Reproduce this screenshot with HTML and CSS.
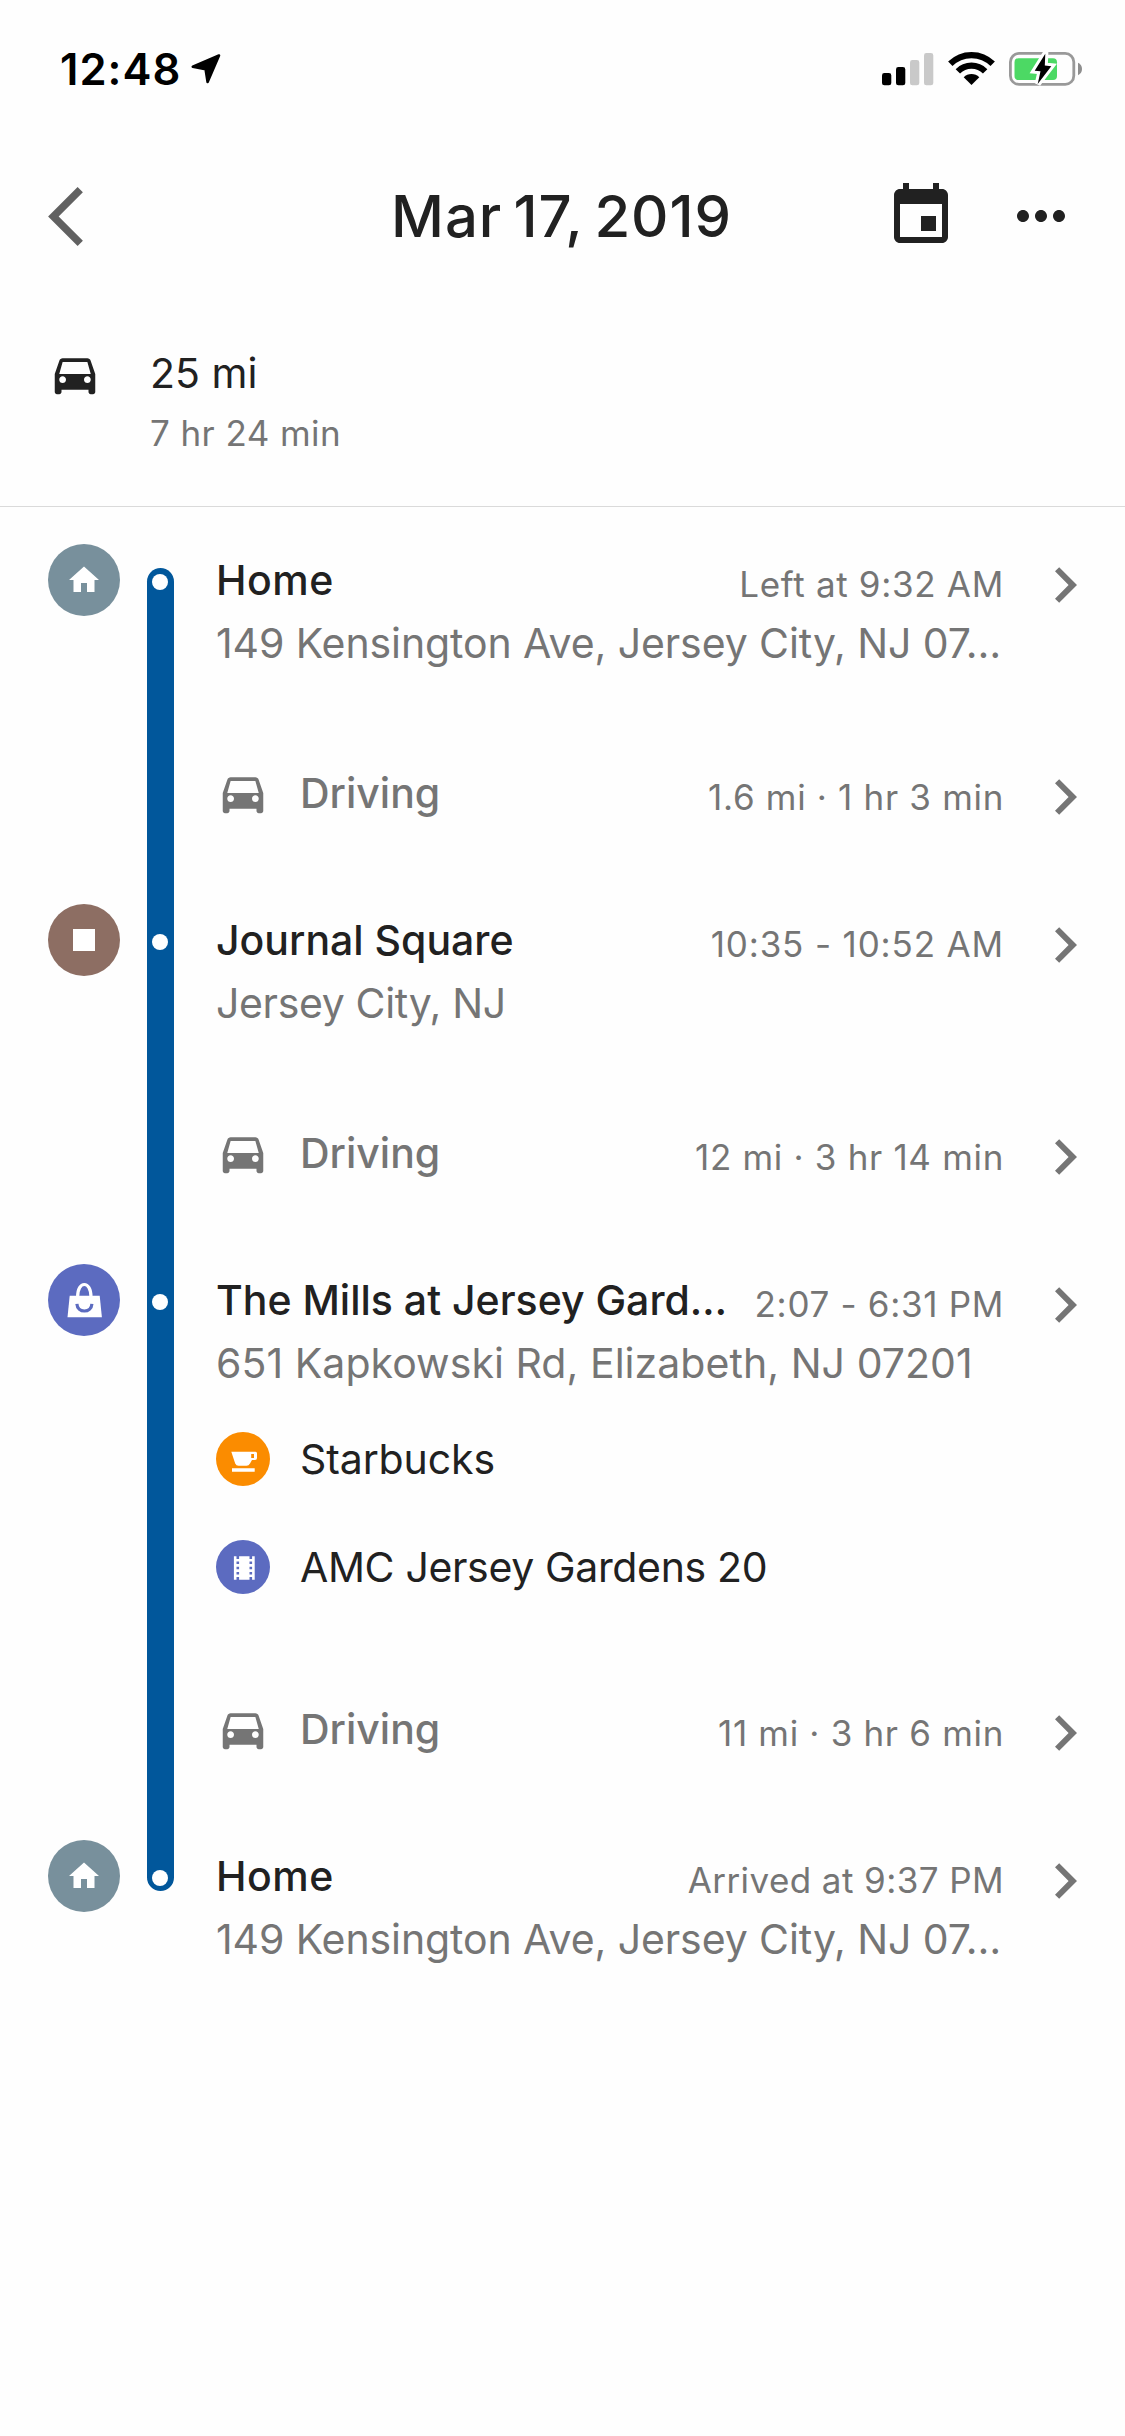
FILE: index.html
```
<!DOCTYPE html>
<html lang="en">
<head>
<meta charset="utf-8">
<title>Timeline</title>
<link rel="stylesheet" href="styles.css">
</head>
<body>
<svg class="sprite" aria-hidden="true">
  <symbol id="car" viewBox="0 0 24 24"><path d="M18.92 6.01C18.72 5.42 18.16 5 17.5 5h-11c-.66 0-1.21.42-1.42 1.01L3 12v8c0 .55.45 1 1 1h1c.55 0 1-.45 1-1v-1h12v1c0 .55.45 1 1 1h1c.55 0 1-.45 1-1v-8l-2.08-5.99zM6.5 16c-.83 0-1.5-.67-1.5-1.5S5.67 13 6.5 13s1.5.67 1.5 1.5S7.33 16 6.5 16zm11 0c-.83 0-1.5-.67-1.5-1.5s.67-1.5 1.5-1.5 1.5.67 1.5 1.5-.67 1.5-1.5 1.5zM5 12l1.5-5.3h11L19 12H5z"/></symbol>
  <symbol id="home" viewBox="0 0 24 24"><path d="M10 20v-6h4v6h5v-8h3L12 3 2 12h3v8z"/></symbol>
  <symbol id="next" viewBox="8.59 6 7.41 12"><path d="M10 6L8.59 7.41 13.17 12l-4.58 4.59L10 18l6-6z"/></symbol>
</svg>

<div class="status">
  <span class="clock">12:48</span>
  <svg class="location" viewBox="0 0 30 30"><path d="M28 1.5 1.8 12.7 14.6 15.2 16.6 28Z" fill="#000" stroke="#000" stroke-width="2.6" stroke-linejoin="round"/></svg>
  <div class="indicators">
    <svg class="signal" viewBox="0 0 52 34">
      <rect x="0" y="21" width="9.3" height="12.3" rx="2.4"/>
      <rect x="14" y="15" width="9.3" height="18.3" rx="2.4"/>
      <rect x="28" y="8" width="9.3" height="25.3" rx="2.4" fill="#c9c9c9"/>
      <rect x="42" y="1" width="9.3" height="32.3" rx="2.4" fill="#c9c9c9"/>
    </svg>
    <svg class="wifi" viewBox="0 0 45 34">
      <path d="M1.300 11.800A30 30 0 0 1 43.700 11.800M8.850 19.350A19.300 19.300 0 0 1 36.150 19.350" fill="none" stroke="#000" stroke-width="6.200"/>
      <path d="M22.5 33 14.7 25.2A11 11 0 0 1 30.3 25.2Z"/>
    </svg>
    <svg class="battery" viewBox="0 0 73 34">
      <rect x="1.4" y="1.4" width="63.4" height="31" rx="8.6" fill="none" stroke="#999" stroke-width="2.8"/>
      <path d="M69 10.8C71.6 12 73 14.3 73 17s-1.4 5-4 6.2Z" fill="#8e8e8e"/>
      <rect x="5.5" y="6.2" width="42.5" height="21.8" rx="4" fill="#4cd964"/>
      <path d="M36.3 1.8 25.7 18.7 31.5 19.3 28.7 32 42.3 14.2 35.8 13.5Z" stroke="#fff" stroke-width="6"/>
      <path d="M36.3 1.8 25.7 18.7 31.5 19.3 28.7 32 42.3 14.2 35.8 13.5Z"/>
    </svg>
  </div>
</div>

<header class="bar">
  <svg class="back" viewBox="0 2.1 11.67 19.8"><path d="M11.67 3.87L9.9 2.1 0 12l9.9 9.9 1.77-1.77L3.54 12z"/></svg>
  <h1 class="title">Mar 17, 2019</h1>
  <div class="actions">
    <svg class="action" viewBox="0 0 24 24"><path d="M17 12h-5v5h5v-5zM16 1v2H8V1H6v2H5c-1.11 0-1.99.9-1.99 2L3 19c0 1.1.89 2 2 2h14c1.1 0 2-.9 2-2V5c0-1.1-.9-2-2-2h-1V1h-2zm3 18H5V8h14v11z"/></svg>
    <svg class="action" viewBox="0 0 24 24"><path d="M6 10c-1.1 0-2 .9-2 2s.9 2 2 2 2-.9 2-2-.9-2-2-2zm12 0c-1.1 0-2 .9-2 2s.9 2 2 2 2-.9 2-2-.9-2-2-2zm-6 0c-1.1 0-2 .9-2 2s.9 2 2 2 2-.9 2-2-.9-2-2-2z"/></svg>
  </div>
</header>

<section class="summary">
  <svg class="car"><use href="#car"/></svg>
  <div class="totals">
    <div class="distance">25 mi</div>
    <div class="duration">7 hr 24 min</div>
  </div>
</section>

<main class="timeline">
  <div class="row stop first">
    <div class="badge home"><svg class="glyph"><use href="#home"/></svg></div>
    <div class="rail"><i class="dot"></i></div>
    <div class="body">
      <div class="line"><span class="name loose">Home</span><span class="time">Left at 9:32 AM</span></div>
      <div class="address">149 Kensington Ave, Jersey City, NJ 07…</div>
    </div>
    <svg class="next"><use href="#next"/></svg>
  </div>

  <div class="row drive">
    <div class="rail"></div>
    <div class="body">
      <div class="line"><span class="mode"><svg class="car"><use href="#car"/></svg>Driving</span><span class="time">1.6 mi · 1 hr 3 min</span></div>
    </div>
    <svg class="next"><use href="#next"/></svg>
  </div>

  <div class="row stop">
    <div class="badge square"><i class="block"></i></div>
    <div class="rail"><i class="dot"></i></div>
    <div class="body">
      <div class="line"><span class="name">Journal Square</span><span class="time airy">10:35 - 10:52 AM</span></div>
      <div class="address tight">Jersey City, NJ</div>
    </div>
    <svg class="next"><use href="#next"/></svg>
  </div>

  <div class="row drive">
    <div class="rail"></div>
    <div class="body">
      <div class="line"><span class="mode"><svg class="car"><use href="#car"/></svg>Driving</span><span class="time">12 mi · 3 hr 14 min</span></div>
    </div>
    <svg class="next"><use href="#next"/></svg>
  </div>

  <div class="row stop visits">
    <div class="badge shop">
      <svg class="bag" viewBox="0 0 72 72">
        <path d="M29.6 33C29.6 24.5 32.8 20.5 36.3 20.5S43 24.5 43 33" fill="none" stroke="#fff" stroke-width="3.2"/>
        <path d="M21.7 31.7H51.7L53.9 53.3H19.5Z"/>
        <path d="M28.9 39.8C29.4 49.4 43.4 49.4 43.9 39.8" fill="none" stroke="#5c6bc0" stroke-width="3.2"/>
      </svg>
    </div>
    <div class="rail"><i class="dot"></i></div>
    <div class="body">
      <div class="line"><span class="name">The Mills at Jersey Gard…</span><span class="time">2:07 - 6:31 PM</span></div>
      <div class="address wide">651 Kapkowski Rd, Elizabeth, NJ 07201</div>
      <div class="places">
        <div class="place">
          <svg class="pin" viewBox="0 0 54 54">
            <circle cx="27" cy="27" r="27" fill="#fb8c00"/>
            <path fill="#fff" fill-rule="evenodd" d="M15.3 19.7H39.5Q41 19.7 41 21.2V26Q41 28 39 28H36L34 31.5Q32.8 33.7 30.5 33.7H22.5Q20.2 33.7 19.2 31.5ZM35.2 22V26H38V22ZM16 36.3H38.7V39.7H16Z"/>
          </svg>
          <span class="visit">Starbucks</span>
        </div>
        <div class="place">
          <svg class="pin" viewBox="0 0 54 54">
            <circle cx="27" cy="27" r="27" fill="#5c6bc0"/>
            <path fill="#fff" transform="translate(12.7 12.4) scale(1.3)" d="M18 3v2h-2V3H8v2H6V3H4v18h2v-2h2v2h8v-2h2v2h2V3h-2zM8 17H6v-2h2v2zm0-4H6v-2h2v2zm0-4H6V7h2v2zm10 8h-2v-2h2v2zm0-4h-2v-2h2v2zm0-4h-2V7h2v2z" transform-origin="0 0"/>
          </svg>
          <span class="tight">AMC Jersey Gardens 20</span>
        </div>
      </div>
    </div>
    <svg class="next"><use href="#next"/></svg>
  </div>

  <div class="row drive">
    <div class="rail"></div>
    <div class="body">
      <div class="line"><span class="mode"><svg class="car"><use href="#car"/></svg>Driving</span><span class="time">11 mi · 3 hr 6 min</span></div>
    </div>
    <svg class="next"><use href="#next"/></svg>
  </div>

  <div class="row stop last">
    <div class="badge home"><svg class="glyph"><use href="#home"/></svg></div>
    <div class="rail"><i class="dot"></i></div>
    <div class="body">
      <div class="line"><span class="name loose">Home</span><span class="time snug">Arrived at 9:37 PM</span></div>
      <div class="address">149 Kensington Ave, Jersey City, NJ 07…</div>
    </div>
    <svg class="next"><use href="#next"/></svg>
  </div>
</main>
</body>
</html>
```
FILE: styles.css
```
* { box-sizing: border-box; }

body {
  margin: 0;
  min-height: 2436px;
  background: #fefefe;
  color: #212121;
  font: 400 41px/50px Inter, "Liberation Sans", sans-serif;
  white-space: nowrap;
}

svg { display: block; flex: none; }
.sprite { display: none; }

/* Status bar */
.status {
  display: flex;
  align-items: center;
  height: 132px;
  padding: 6px 43px 0 60px;
}
.clock {
  color: #000;
  font-size: 43.5px;
  line-height: 52px;
  font-weight: 600;
  letter-spacing: 1.04px;
}
.location { width: 30px; height: 30px; margin-left: 10px; }
.indicators { display: flex; margin-left: auto; }
.signal { width: 52px; height: 34px; }
.wifi { width: 45px; height: 34px; margin: 0 15px; overflow: visible; }
.battery { width: 73px; height: 34px; }

/* Navigation bar */
.bar {
  display: grid;
  grid-template-columns: 1fr auto 1fr;
  align-items: center;
  height: 168px;
  padding: 0 48px;
}
.back { width: 35px; height: 59px; fill: #616161; }
.title {
  margin: 0;
  padding-right: 2px;
  font-size: 58px;
  line-height: 72px;
  font-weight: 500;
  letter-spacing: .9px;
  word-spacing: -5px;
}
.actions { display: flex; justify-content: flex-end; gap: 48px; }
.action { width: 72px; height: 72px; fill: #212121; }

/* Day totals */
.summary {
  display: flex;
  gap: 48px;
  height: 207px;
  padding: 47px 48px 0;
  border-bottom: 1px solid #dadada;
}
.car { width: 54px; height: 54px; fill: currentColor; }
.totals { display: flex; flex-direction: column; gap: 14px; padding-top: 1px; }
.duration {
  color: #757575;
  font-size: 35px;
  line-height: 42px;
  letter-spacing: .42px;
}

/* Timeline: badge, rail, text and chevron columns */
.timeline { padding: 37px 48px 0; }
.row {
  display: grid;
  grid-template-columns: 99px 27px 42px 788px 51px 22px;
  min-height: 180px;
}
.rail { grid-column: 2; background: #01579b; }
.body { grid-column: 4; }
.next { grid-column: 6; width: 22px; height: 36px; fill: #757575; }

.stop .rail { padding: 30px 5px 0; }
.stop .body { padding-top: 11px; }
.stop .next { margin-top: 23px; }
.visits { min-height: 396px; }
.first .rail { margin-top: 24px; padding-top: 6px; border-radius: 14px 14px 0 0; }
.last .rail { height: 51px; border-radius: 0 0 14px 14px; }
.dot { display: block; width: 16px; height: 16px; border-radius: 50%; background: #fff; }

.drive .body { padding-top: 44px; }
.drive .next { margin-top: 55px; }

.badge {
  display: flex;
  align-items: center;
  justify-content: center;
  width: 72px;
  height: 72px;
  border-radius: 50%;
  fill: #fff;
}
.badge.home { background: #78909c; }
.badge.square { background: #8d6e63; }
.badge.shop { background: #5c6bc0; }
.glyph { width: 36px; height: 36px; }
.block { width: 22px; height: 22px; background: #fff; }
.bag { width: 72px; height: 72px; }

.line { display: flex; justify-content: space-between; height: 50px; }
.name { font-weight: 500; }
.time {
  margin-top: 8px;
  color: #757575;
  font-size: 35px;
  line-height: 42px;
  letter-spacing: .68px;
}
.mode {
  display: flex;
  align-items: center;
  gap: 30px;
  color: #757575;
  font-weight: 500;
}
.address { margin-top: 13px; color: #757575; letter-spacing: -.09px; }
.places { display: flex; flex-direction: column; gap: 54px; margin-top: 44px; }
.place { display: flex; align-items: center; gap: 30px; height: 54px; }
.pin { width: 54px; height: 54px; }

/* Tracking adjustments */
.visit { letter-spacing: -.1px; }
.tight { letter-spacing: -.35px; }
.wide { letter-spacing: .05px; }
.loose { letter-spacing: .5px; }
.airy { letter-spacing: .85px; }
.snug { letter-spacing: .42px; }
```
